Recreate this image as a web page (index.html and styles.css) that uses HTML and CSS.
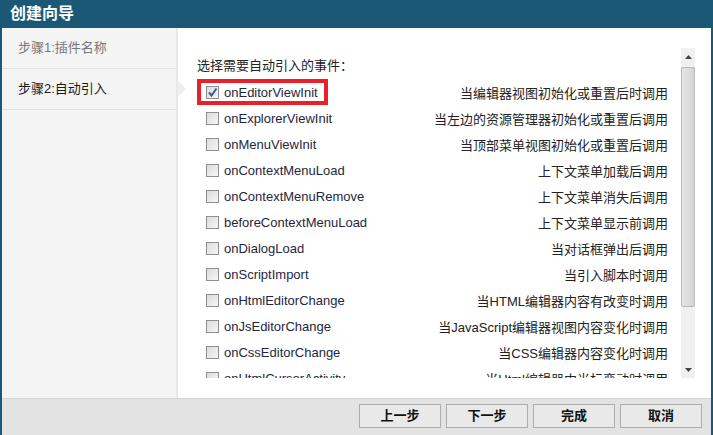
FILE: index.html
```html
<!DOCTYPE html>
<html lang="zh">
<head>
<meta charset="utf-8">
<title>创建向导</title>
<link rel="stylesheet" href="styles.css">
</head>
<body>
<div class="window">
  <div class="titlebar">创建向导</div>
  <div class="main">
    <div class="sidebar">
      <div class="step">步骤1:插件名称</div>
      <div class="step active">步骤2:自动引入</div>
    </div>
    <div class="content">
      <div class="scroller">
        <div class="list">
          <div class="label">选择需要自动引入的事件：</div>
          <div class="row"><span class="item hl"><span class="cb checked"><svg width="11" height="11" viewBox="0 0 11 11"><path d="M2 5.5 L4.5 8.5 L9.5 1.5" fill="none" stroke="#3b5aa6" stroke-width="2"/></svg></span>onEditorViewInit</span><span class="desc">当编辑器视图初始化或重置后时调用</span></div>
          <div class="row"><span class="item"><span class="cb"></span>onExplorerViewInit</span><span class="desc">当左边的资源管理器初始化或重置后调用</span></div>
          <div class="row"><span class="item"><span class="cb"></span>onMenuViewInit</span><span class="desc">当顶部菜单视图初始化或重置后调用</span></div>
          <div class="row"><span class="item"><span class="cb"></span>onContextMenuLoad</span><span class="desc">上下文菜单加载后调用</span></div>
          <div class="row"><span class="item"><span class="cb"></span>onContextMenuRemove</span><span class="desc">上下文菜单消失后调用</span></div>
          <div class="row"><span class="item"><span class="cb"></span>beforeContextMenuLoad</span><span class="desc">上下文菜单显示前调用</span></div>
          <div class="row"><span class="item"><span class="cb"></span>onDialogLoad</span><span class="desc">当对话框弹出后调用</span></div>
          <div class="row"><span class="item"><span class="cb"></span>onScriptImport</span><span class="desc">当引入脚本时调用</span></div>
          <div class="row"><span class="item"><span class="cb"></span>onHtmlEditorChange</span><span class="desc">当HTML编辑器内容有改变时调用</span></div>
          <div class="row"><span class="item"><span class="cb"></span>onJsEditorChange</span><span class="desc">当JavaScript编辑器视图内容变化时调用</span></div>
          <div class="row"><span class="item"><span class="cb"></span>onCssEditorChange</span><span class="desc">当CSS编辑器内容变化时调用</span></div>
          <div class="row"><span class="item"><span class="cb"></span>onHtmlCursorActivity</span><span class="desc">当Html编辑器中光标变动时调用</span></div>
        </div>
        <div class="scrollbar">
          <div class="sb-btn"><svg width="7" height="4" viewBox="0 0 7 4"><path d="M0 4 L3.5 0 L7 4 Z" fill="#444"/></svg></div>
          <div class="sb-thumb"></div>
          <div class="sb-track"></div>
          <div class="sb-btn"><svg width="7" height="4" viewBox="0 0 7 4"><path d="M0 0 L3.5 4 L7 0 Z" fill="#444"/></svg></div>
        </div>
      </div>
    </div>
  </div>
  <div class="footer">
    <button class="btn">上一步</button>
    <button class="btn">下一步</button>
    <button class="btn">完成</button>
    <button class="btn">取消</button>
  </div>
</div>
</body>
</html>
```

FILE: styles.css
```css
* { box-sizing: border-box; }
html, body { margin: 0; padding: 0; }
body {
  width: 713px;
  height: 435px;
  overflow: hidden;
  font-family: "Liberation Sans", "Noto Sans CJK SC", sans-serif;
  font-size: 13px;
  color: #222;
}
.window {
  width: 713px;
  height: 435px;
  display: flex;
  flex-direction: column;
  border-left: 2px solid #1b5876;
  border-right: 2px solid #1b5876;
  background: #fff;
}
.titlebar {
  height: 28px;
  background: #1b5876;
  color: #fff;
  font-size: 16px;
  font-weight: bold;
  line-height: 28px;
  padding-left: 8px;
  margin: 0 -2px;
  padding-left: 10px;
}
.main {
  height: 370px;
  display: flex;
}
.sidebar {
  width: 176px;
  background: #f4f4f4;
  border-right: 2px solid #e8e8e8;
  flex: none;
}
.step {
  height: 41px;
  line-height: 40px;
  padding-left: 16px;
  border-bottom: 1px solid #e2e2e2;
  color: #777;
  position: relative;
}
.step.active { color: #1a1a1a; }
.step.active::after {
  content: "";
  position: absolute;
  right: -10px;
  top: 12px;
  border-left: 8px solid #efefef;
  border-top: 8px solid transparent;
  border-bottom: 8px solid transparent;
}
.content {
  flex: 1;
  padding: 20px 16px 20px 19px;
}
.scroller {
  height: 330px;
  display: flex;
}
.list {
  flex: 1;
  overflow: hidden;
  padding: 9px 13px 0 0;
}
.label {
  height: 18px;
  line-height: 18px;
  margin-bottom: 4px;
}
.row {
  height: 26px;
  display: flex;
  align-items: center;
  justify-content: space-between;
}
.item {
  display: flex;
  align-items: center;
  height: 26px;
  border: 4px solid transparent;
  padding: 0 6px 0 5px;
  color: #1f2640;
}
.item.hl { border-color: #e8202a; }
.cb {
  width: 13px;
  height: 13px;
  border: 1px solid #8f8f8f;
  background: linear-gradient(135deg, #dcdcdc, #f6f6f6);
  margin-right: 5px;
  display: flex;
  align-items: center;
  justify-content: center;
  flex: none;
}
.desc { color: #222; }
.scrollbar {
  width: 14px;
  flex: none;
  display: flex;
  flex-direction: column;
  background: #f0f0f0;
}
.sb-btn {
  height: 17px;
  display: flex;
  align-items: center;
  justify-content: center;
}
.sb-thumb {
  height: 240px;
  margin: 2px 0 0 0;
  border: 1px solid #bababa;
  border-radius: 2px;
  background: linear-gradient(to right, #e6e6e6, #d4d4d4);
}
.sb-track { flex: 1; }
.footer {
  flex: 1;
  background: #e3e3e3;
  border-top: 1px solid #d6d6d6;
  display: flex;
  justify-content: flex-end;
  align-items: flex-start;
  gap: 5px;
  padding: 5px 9px 0 0;
}
.btn {
  width: 82px;
  height: 24px;
  border: 1px solid #adadad;
  background: #e9e9e9;
  font-family: "Liberation Sans", "Noto Sans CJK SC", sans-serif;
  font-size: 13px;
  font-weight: bold;
  color: #111;
  padding: 0;
  line-height: 22px;
}
```
